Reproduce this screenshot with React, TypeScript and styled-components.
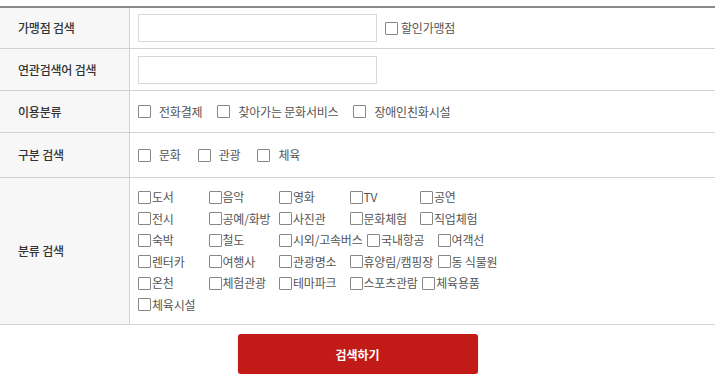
import styled, { createGlobalStyle } from 'styled-components';

const GlobalStyle = createGlobalStyle`
  body {
    margin: 0;
    background: #fff;
    font-family: "Noto Sans CJK KR", "Noto Sans", sans-serif;
  }
`;

const Wrap = styled.div`
  width: 715px;
  padding-top: 6px;
`;

const Table = styled.div`
  border-top: 2px solid #8a8a8a;
`;

const Row = styled.div<{ $h: number }>`
  display: grid;
  grid-template-columns: 130px 1fr;
  box-sizing: border-box;
  height: ${p => p.$h}px;
  border-bottom: 1px solid #d2d2d2;
  line-height: 14px;
`;

const Label = styled.div`
  background: #f7f7f7;
  border-right: 1px solid #d2d2d2;
  display: flex;
  align-items: center;
  padding-left: 18px;
  font-size: 12px;
  font-weight: 500;
  color: #333;
  letter-spacing: -0.2px;
`;

const Cell = styled.div`
  display: flex;
  align-items: center;
  padding-left: 8px;
`;

const TextInput = styled.input`
  width: 239px;
  height: 28px;
  box-sizing: border-box;
  border: 1px solid #d9d9d9;
  margin: 0;
  outline: none;
`;

const Box = styled.span`
  display: inline-block;
  width: 11px;
  height: 11px;
  border: 1px solid #888;
  border-radius: 1px;
  background: #fff;
  flex: none;
`;

const Check = styled.label<{ $gap: number; $mr?: number }>`
  display: inline-flex;
  align-items: center;
  gap: ${p => p.$gap}px;
  margin-right: ${p => p.$mr ?? 0}px;
  font-size: 12px;
  color: #555;
  white-space: nowrap;
  letter-spacing: -0.2px;
`;

const Grid = styled.div`
  display: flex;
  flex-direction: column;
  gap: 7.6px;
  padding: 12px 0 0 8px;
`;

const GridLine = styled.div`
  display: flex;
  height: 14px;
  align-items: center;
`;

const GridItem = styled(Check)`
  min-width: 66px;
  margin-right: 4.5px;
`;

const ButtonRow = styled.div`
  display: flex;
  justify-content: center;
  padding-top: 9px;
`;

const SearchButton = styled.button`
  width: 240px;
  height: 40px;
  border: none;
  border-radius: 3px;
  background: #c21a17;
  color: #fff;
  font-family: "Noto Sans CJK KR", sans-serif;
  font-size: 12px;
  font-weight: 700;
  box-shadow: 0 1px 2px rgba(0, 0, 0, 0.2);
`;

const categories = [
  ['도서', '음악', '영화', 'TV', '공연'],
  ['전시', '공예/화방', '사진관', '문화체험', '직업체험'],
  ['숙박', '철도', '시외/고속버스', '국내항공', '여객선'],
  ['렌터카', '여행사', '관광명소', '휴양림/캠핑장', '동 식물원'],
  ['온천', '체험관광', '테마파크', '스포츠관람', '체육용품'],
  ['체육시설'],
];

export default function App() {
  return (
    <Wrap>
      <GlobalStyle />
      <Table>
        <Row $h={41}>
          <Label>가맹점 검색</Label>
          <Cell>
            <TextInput />
            <Check $gap={3} style={{ marginLeft: 8 }}>
              <Box />할인가맹점
            </Check>
          </Cell>
        </Row>
        <Row $h={42}>
          <Label>연관검색어 검색</Label>
          <Cell>
            <TextInput />
          </Cell>
        </Row>
        <Row $h={42}>
          <Label>이용분류</Label>
          <Cell>
            <Check $gap={8} $mr={15}><Box />전화결제</Check>
            <Check $gap={8} $mr={15}><Box />찾아가는 문화서비스</Check>
            <Check $gap={8}><Box />장애인친화시설</Check>
          </Cell>
        </Row>
        <Row $h={45}>
          <Label>구분 검색</Label>
          <Cell>
            <Check $gap={8} $mr={17}><Box />문화</Check>
            <Check $gap={8} $mr={17}><Box />관광</Check>
            <Check $gap={8}><Box />체육</Check>
          </Cell>
        </Row>
        <Row $h={147}>
          <Label>분류 검색</Label>
          <Grid>
            {categories.map((line, i) => (
              <GridLine key={i}>
                {line.map(name => (
                  <GridItem key={name} $gap={1}>
                    <Box />
                    {name}
                  </GridItem>
                ))}
              </GridLine>
            ))}
          </Grid>
        </Row>
      </Table>
      <ButtonRow>
        <SearchButton>검색하기</SearchButton>
      </ButtonRow>
    </Wrap>
  );
}
